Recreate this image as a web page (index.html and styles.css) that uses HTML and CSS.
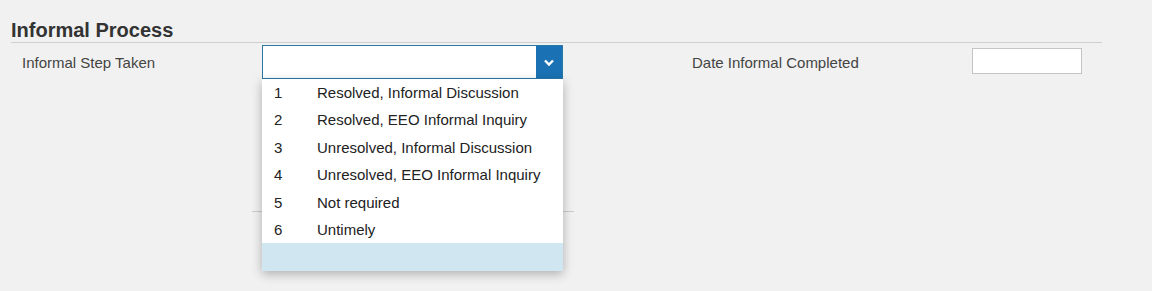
FILE: index.html
```html
<!DOCTYPE html>
<html>
<head>
<meta charset="utf-8">
<link rel="stylesheet" href="styles.css">
</head>
<body>
<div class="section">
  <h2 class="title">Informal Process</h2>
  <div class="row">
    <div class="label label-step">Informal Step Taken</div>
    <div class="select">
      <div class="select-value"></div>
      <div class="select-btn">
        <svg width="12" height="9" viewBox="0 0 12 9"><path d="M2 2.5 L6 6.5 L10 2.5" fill="none" stroke="#fff" stroke-width="2.4"/></svg>
      </div>
      <ul class="menu">
        <li class="opt"><span class="num">1</span><span class="txt">Resolved, Informal Discussion</span></li>
        <li class="opt"><span class="num">2</span><span class="txt">Resolved, EEO Informal Inquiry</span></li>
        <li class="opt"><span class="num">3</span><span class="txt">Unresolved, Informal Discussion</span></li>
        <li class="opt"><span class="num">4</span><span class="txt">Unresolved, EEO Informal Inquiry</span></li>
        <li class="opt"><span class="num">5</span><span class="txt">Not required</span></li>
        <li class="opt"><span class="num">6</span><span class="txt">Untimely</span></li>
        <li class="opt opt-active"></li>
      </ul>
    </div>
    <div class="label label-date">Date Informal Completed</div>
    <div class="date-input"></div>
  </div>
  <div class="divider"></div>
</div>
</body>
</html>
```
FILE: styles.css
```css
html, body {
  margin: 0;
  padding: 0;
  background: #f1f1f1;
  font-family: "Liberation Sans", Arial, sans-serif;
}
body {
  min-height: 100vh;
}
.section {
  margin-left: 11px;
  width: 1091px;
  min-height: 291px;
}
.title {
  margin: 0;
  padding-top: 18px;
  height: 24px;
  line-height: 24px;
  font-size: 20px;
  font-weight: bold;
  color: #333;
  border-bottom: 1px solid #cfcfcf;
}
.row {
  display: flex;
  align-items: center;
  margin-top: 1px;
  height: 36px;
  padding-left: 11px;
}
.label {
  font-size: 15px;
  color: #444;
}
.label-step {
  width: 240px;
}
.select {
  position: relative;
  width: 301px;
  height: 34px;
  box-sizing: border-box;
  border: 1px solid #2a78a8;
  background: #fff;
  display: flex;
}
.select-value {
  flex: 1;
}
.select-btn {
  width: 26px;
  background: #1a72b4;
  display: flex;
  align-items: center;
  justify-content: center;
}
.menu {
  position: absolute;
  top: 33px;
  left: -1px;
  width: 301px;
  margin: 0;
  padding: 0;
  list-style: none;
  background: #fff;
  box-shadow: 0 3px 10px rgba(0, 0, 0, 0.28);
  z-index: 5;
}
.opt {
  display: flex;
  height: 27.4px;
  line-height: 27.4px;
  padding-left: 12px;
  font-size: 15px;
  color: #222;
}
.num {
  width: 43px;
}
.opt-active {
  background: #d0e6f1;
}
.label-date {
  margin-left: 129px;
  width: 280px;
}
.date-input {
  align-self: flex-start;
  margin-top: 4px;
  width: 110px;
  height: 26px;
  box-sizing: border-box;
  border: 1px solid #c4c4c4;
  background: #fff;
}
.divider {
  margin-top: 131px;
  margin-left: 241px;
  width: 322px;
  border-top: 1px solid #cccccc;
}
```
